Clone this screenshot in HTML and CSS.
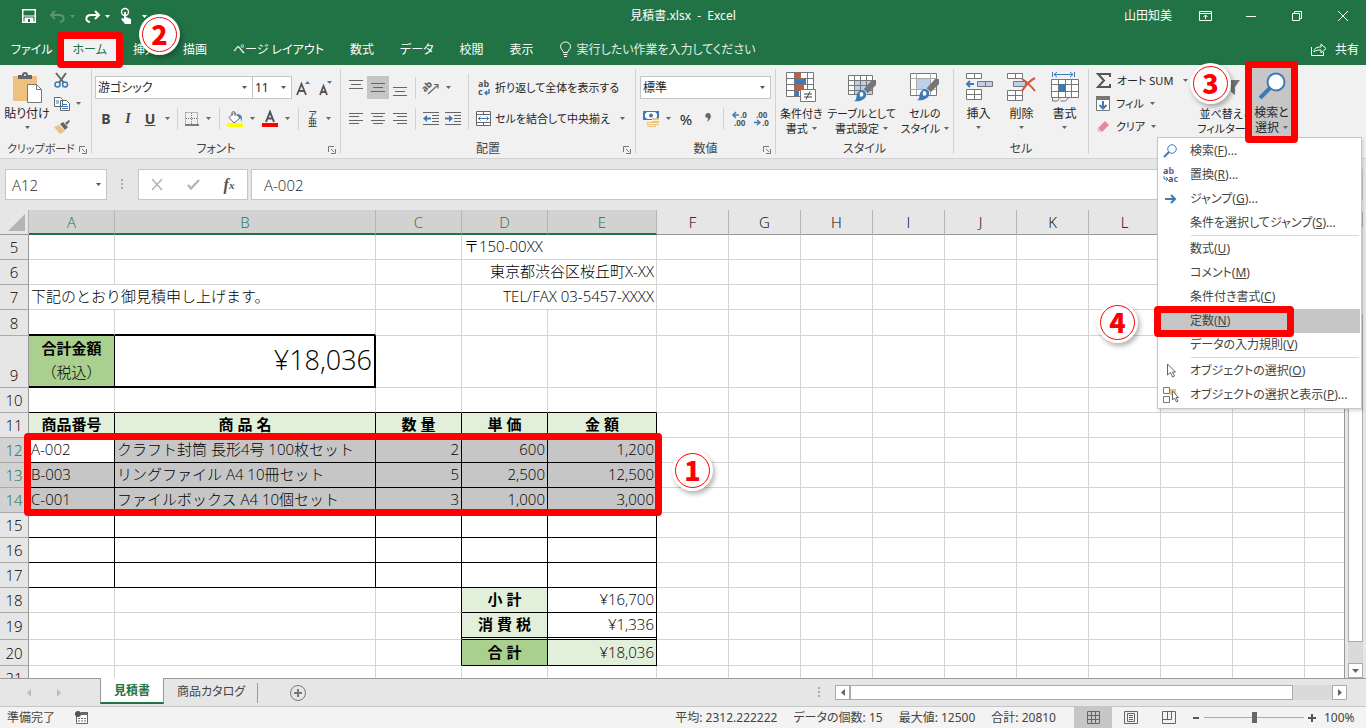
FILE: index.html
```html
<!DOCTYPE html>
<html lang="ja">

<head>
  <meta charset="UTF-8" />
  <meta name="viewport" content="width=device-width,initial-scale=1.0" />
  <title>見積書.xlsx - Excel</title>
  <link rel="stylesheet" href="styles.css">
</head>

<body>
  <svg class="defs" width="0" height="0" aria-hidden="true">
    <symbol id="down" viewBox="0 0 5 3"><path d="M0 0h5L2.500 3z" fill="currentColor" /></symbol>
    <symbol id="launcher" viewBox="0 0 8 8"><path d="M.5 6V.5H6M3 3l3 3M7.500 3v4.500H3" fill="none" stroke="#777" /></symbol>
    <symbol id="brush" viewBox="0 0 24 22">
      <path d="M23 0v5l-9 9-4-4 9-10z" fill="#777" />
      <path d="M14 14l-4-4" stroke="#f1f1f1" stroke-width="2" />
      <path d="M9 10c3 0 5 3 4 6-1 4-7 6-12 5 3-1 2-4 3-7 1-2 3-4 5-4z" fill="#3e7ab8" />
      <path d="M8 12c2 0 3 2 2 4-1 1-3 1-3 0 0-2-1-3 1-4z" fill="#fff" />
    </symbol>
    <symbol id="lens" viewBox="0 0 28 28">
      <circle cx="18" cy="10" r="8.500" fill="#fff" stroke="#3e7ab8" stroke-width="2" />
      <path d="M12 16L2 26" stroke="#3e7ab8" stroke-width="4" />
    </symbol>
  </svg>

  <!-- タイトルバー -->
  <header class="top">
    <div class="titlebar">
      <div class="quick">
        <button aria-label="上書き保存"><svg width="14" height="14" viewBox="0 0 14 14"><path d="M.75.75h12.500v12.500H.75z" fill="none" stroke="#fff" stroke-width="1.500" /><path d="M1 7h12M3 9h8v4H3z" fill="#fff" stroke="#fff" /><path d="M6 10h2v3H6z" fill="#217346" /></svg></button>
        <button class="dim" aria-label="元に戻す"><svg width="15" height="13" viewBox="0 0 15 13"><path d="M5 1L1 5l4 4M1 5h8c6 0 6 7 1 7" fill="none" stroke="currentColor" stroke-width="2" /></svg><svg class="arrow"><use href="#down" /></svg></button>
        <button aria-label="やり直し"><svg width="15" height="13" viewBox="0 0 15 13"><path d="M10 1l4 4-4 4M14 5H6c-6 0-6 7-1 7" fill="none" stroke="#fff" stroke-width="2" /></svg><svg class="arrow"><use href="#down" /></svg></button>
        <button aria-label="タッチ/マウス モード"><svg width="12" height="16" viewBox="0 0 12 16"><circle cx="5" cy="4" r="3.500" fill="none" stroke="#fff" stroke-width="1.400" /><path d="M4 4h2v5l5 2v5H5L1 11l2-1 1 1z" fill="#fff" /></svg></button>
        <svg class="arrow"><use href="#down" /></svg>
      </div>
      <span class="title">見積書.xlsx&nbsp; -&nbsp; Excel</span>
      <div class="window">
        <span class="user">山田知美</span>
        <button aria-label="リボンの表示オプション"><svg width="13" height="10" viewBox="0 0 13 10"><path d="M.5.5h12v9H.5zM1 2.500h11M6.500 8V4M4.500 6l2-2 2 2" fill="none" stroke="#fff" /></svg></button>
        <button aria-label="最小化"><svg width="10" height="10" viewBox="0 0 10 10"><path d="M0 5.500h10" stroke="#fff" /></svg></button>
        <button aria-label="元のサイズに戻す"><svg width="10" height="10" viewBox="0 0 10 10"><path d="M.5 2.500h7v7h-7zM2.500 2V.5h7v7H8" fill="none" stroke="#fff" /></svg></button>
        <button aria-label="閉じる"><svg width="10" height="10" viewBox="0 0 10 10"><path d="M0 0l10 10M10 0L0 10" stroke="#fff" /></svg></button>
      </div>
    </div>

    <nav class="tabs">
      <button>ファイル</button>
      <div class="marked home">
        <button class="active">ホーム</button>
        <div class="frame frame-tab"></div>
      </div>
      <div class="marked">
        <button>挿入</button>
        <div class="num num-2">2</div>
      </div>
      <button>描画</button>
      <button>ページ レイアウト</button>
      <button>数式</button>
      <button>データ</button>
      <button>校閲</button>
      <button>表示</button>
      <button class="tell"><svg width="11" height="15" viewBox="0 0 11 15"><path d="M3.500 10.500c0-2-3-3-3-6a5 4.500 0 0 1 10 0c0 3-3 4-3 6zM3.500 12.500h4M4 14.500h3" fill="none" stroke="#fff" /></svg>実行したい作業を入力してください</button>
      <button class="share"><svg width="16" height="13" viewBox="0 0 16 13"><path d="M.5 4v8.500h12V9" fill="none" stroke="#fff" /><path d="M3 9c0-4 3-5 7-5V1l5 4.500L10 10V7C7 7 5 7 3 9z" fill="none" stroke="#fff" /></svg>共有</button>
    </nav>
  </header>

  <!-- リボン -->
  <section class="ribbon">
    <div class="group g-clip">
      <div class="body">
        <button class="big"><svg width="30" height="32" viewBox="0 0 30 32"><path d="M1 4h24v25H1z" fill="#ecc27e" /><path d="M6 7V3h4a3 3 0 0 1 6 0h4v4z" fill="#666" /><circle cx="13" cy="3" r="1" fill="#f1f1f1" /><path d="M15.500 12.500h9l5 5v13h-14z" fill="#fff" stroke="#777" /><path d="M24.500 12.500v5h5" fill="none" stroke="#777" /></svg><span>貼り付け</span><svg class="arrow"><use href="#down" /></svg></button>
        <div class="stack">
          <button aria-label="切り取り"><svg width="15" height="15" viewBox="0 0 15 15"><path d="M2 0l8 10M12 0L5 10" stroke="#666" stroke-width="2" /><circle cx="3.500" cy="11.500" r="2.500" fill="none" stroke="#3e7ab8" stroke-width="1.500" /><circle cx="11" cy="11.500" r="2.500" fill="none" stroke="#3e7ab8" stroke-width="1.500" /></svg></button>
          <button aria-label="コピー"><svg width="16" height="14" viewBox="0 0 16 14"><path d="M.5.5h6l2 2v7h-8zM6.500 3.500h6l3 3v7h-9z" fill="#fff" stroke="#666" /><path d="M2 4h3M2 6h3M8 7.500h5M8 9.500h6M8 11.500h6" stroke="#3e7ab8" /></svg><svg class="arrow"><use href="#down" /></svg></button>
          <button aria-label="書式のコピー"><svg width="16" height="14" viewBox="0 0 16 14"><path d="M0 7l5-2 6 6-5 3z" fill="#ecc27e" /><path d="M6 4l3-2 5 5-3 3zM11 3l4-3 1 1-3 4z" fill="#666" /></svg></button>
        </div>
      </div>
      <div class="foot"><span>クリップボード</span><svg class="launch"><use href="#launcher" /></svg></div>
    </div>

    <div class="group g-font">
      <div class="body rows">
        <div class="line">
          <select class="font-name" aria-label="フォント"><option>游ゴシック</option></select><select class="font-size" aria-label="フォント サイズ"><option>11</option></select>
          <button class="glyph" aria-label="フォント サイズの拡大"><svg width="15" height="16" viewBox="0 0 15 16"><path d="M1 15L5.500 4 10 15M2.500 11h6" fill="none" stroke="#555" stroke-width="1.800" /><path d="M9 4l2.500-3L14 4z" fill="#3e7ab8" /></svg></button>
          <button class="glyph" aria-label="フォント サイズの縮小"><svg width="15" height="16" viewBox="0 0 15 16"><path d="M2 15l3.500-9L9 15M3.500 12h4" fill="none" stroke="#555" stroke-width="1.800" /><path d="M9 1h5l-2.500 3z" fill="#3e7ab8" /></svg></button>
        </div>
        <div class="line">
          <button class="biu"><b>B</b></button>
          <button class="biu"><i>I</i></button>
          <button class="biu"><u>U</u></button>
          <button class="more" aria-label="下線の種類"><svg class="arrow"><use href="#down" /></svg></button>
          <i class="sep"></i>
          <button class="tool" aria-label="罫線"><svg width="14" height="14" viewBox="0 0 14 14"><path d="M.5.5h12v12M.5.5v12M6.500 1v12M1 6.500h12" fill="none" stroke="#777" stroke-dasharray="1 1" /><path d="M0 13h14" stroke="#555" stroke-width="1.500" /></svg><svg class="arrow"><use href="#down" /></svg></button>
          <i class="sep"></i>
          <button class="tool" aria-label="塗りつぶしの色"><svg width="16" height="16" viewBox="0 0 16 16"><path d="M2 6.500l5-5 6 5.500-6 5z" fill="#fff" stroke="#666" /><path d="M5 5V2c0-2 3-2 3 0v3" fill="none" stroke="#666" /><path d="M10 3c5 0 6 4 4 8 0-4-1-5-3-6z" fill="#3e7ab8" /><path d="M0 12h16v4H0z" fill="#ff0" /></svg><svg class="arrow"><use href="#down" /></svg></button>
          <button class="tool" aria-label="フォントの色"><svg width="16" height="16" viewBox="0 0 16 16"><path d="M4 11L8 1l4 10M5.500 7.500h5" fill="none" stroke="#555" stroke-width="2" /><path d="M0 12h16v4H0z" fill="#f00" /></svg><svg class="arrow"><use href="#down" /></svg></button>
          <i class="sep"></i>
          <button class="tool"><span class="ruby">ア<br>亜</span><svg class="arrow"><use href="#down" /></svg></button>
        </div>
      </div>
      <div class="foot"><span>フォント</span><svg class="launch"><use href="#launcher" /></svg></div>
    </div>

    <div class="group g-align">
      <div class="body">
        <div class="rows">
          <div class="line">
            <button class="glyph" aria-label="上揃え"><svg width="14" height="16" viewBox="0 0 14 16"><path d="M0 .5h14M2 4.500h10M0 8.500h14" stroke="#666" /></svg></button>
            <button class="glyph on" aria-label="上下中央揃え"><svg width="14" height="16" viewBox="0 0 14 16"><path d="M0 3.500h14M2 7.500h10M0 11.500h14" stroke="#666" /></svg></button>
            <button class="glyph" aria-label="下揃え"><svg width="14" height="16" viewBox="0 0 14 16"><path d="M0 7.500h14M2 11.500h10M0 15.500h14" stroke="#666" /></svg></button>
            <i class="sep"></i>
            <button class="tool" aria-label="方向"><svg width="16" height="16" viewBox="0 0 16 16"><path d="M5 14L15 5M11 4.500h4v4" fill="none" stroke="#666" stroke-width="1.200" /><text x="0" y="10" transform="rotate(-45 4 9)" class="svg-ab">ab</text></svg><svg class="arrow"><use href="#down" /></svg></button>
          </div>
          <div class="line">
            <button class="glyph" aria-label="左揃え"><svg width="14" height="12" viewBox="0 0 14 12"><path d="M0 .5h14M0 3.500h10M0 7.500h14M0 10.500h10" stroke="#666" /></svg></button>
            <button class="glyph" aria-label="中央揃え"><svg width="14" height="12" viewBox="0 0 14 12"><path d="M0 .5h14M2 3.500h10M0 7.500h14M2 10.500h10" stroke="#666" /></svg></button>
            <button class="glyph" aria-label="右揃え"><svg width="14" height="12" viewBox="0 0 14 12"><path d="M0 .5h14M4 3.500h10M0 7.500h14M4 10.500h10" stroke="#666" /></svg></button>
            <i class="sep"></i>
            <button class="glyph" aria-label="インデントを減らす"><svg width="16" height="13" viewBox="0 0 16 13"><path d="M0 .5h16M9 3.500h7M9 6.500h7M9 9.500h7M0 12.500h16" stroke="#666" /><path d="M0 6.500L4 3v2.500h4v2H4V10z" fill="#3e7ab8" /></svg></button>
            <button class="glyph" aria-label="インデントを増やす"><svg width="16" height="13" viewBox="0 0 16 13"><path d="M0 .5h16M9 3.500h7M9 6.500h7M9 9.500h7M0 12.500h16" stroke="#666" /><path d="M8 6.500L4 3v2.500H0v2h4V10z" fill="#3e7ab8" /></svg></button>
          </div>
        </div>
        <i class="sep tall"></i>
        <div class="rows">
          <div class="line">
            <button class="wide"><svg width="15" height="18" viewBox="0 0 15 18"><text x="2" y="8" class="svg-ab">ab</text><text x="2" y="16" class="svg-ab">c</text><path d="M13 10v4H9M11 12l-2 2 2 2" fill="none" stroke="#3e7ab8" stroke-width="1.500" /></svg>折り返して全体を表示する</button>
          </div>
          <div class="line">
            <button class="wide"><svg width="15" height="15" viewBox="0 0 15 15"><path d="M.5.5h14v14H.5zM.5 3.500h14M.5 11.500h14M7.500.5v3M7.500 11.500v3" fill="#fff" stroke="#666" /><path d="M2 7.500h11M4.500 5.500l-2 2 2 2M10.500 5.500l2 2-2 2" fill="none" stroke="#3e7ab8" /></svg>セルを結合して中央揃え<svg class="arrow"><use href="#down" /></svg></button>
          </div>
        </div>
      </div>
      <div class="foot"><span>配置</span><svg class="launch"><use href="#launcher" /></svg></div>
    </div>

    <div class="group g-num">
      <div class="body rows">
        <div class="line"><select class="number-format" aria-label="表示形式"><option>標準</option></select></div>
        <div class="line">
          <button class="tool" aria-label="通貨表示形式"><svg width="16" height="16" viewBox="0 0 16 16"><path d="M0 0h16v9H0z" fill="#3e7ab8" /><path d="M2 3l2-2h8l2 2v3l-2 2H4L2 6z" fill="#fff" /><circle cx="8" cy="4.500" r="2" fill="#3e7ab8" /><path d="M9 7h7v7h-3v2H4v-5h5z" fill="#ecc27e" /><path d="M9 9.500h7M5 12.500h11M4 14.500h8" stroke="#f1f1f1" /></svg><svg class="arrow"><use href="#down" /></svg></button>
          <button class="glyph percent">%</button>
          <button class="glyph comma" aria-label="桁区切りスタイル"><svg width="7" height="9" viewBox="0 0 7 9"><path d="M3 0c4 0 4 6-1 9 1-2 1-3 1-4-4 0-3-5 0-5z" fill="#666" /></svg></button>
          <i class="sep"></i>
          <button class="glyph dec"><svg width="15" height="14" viewBox="0 0 15 14"><path d="M7 3H1M4 0L1 3l3 3" fill="none" stroke="#3e7ab8" stroke-width="1.500" /><text x="8" y="6" class="svg-dec">.0</text><text x="2" y="14" class="svg-dec">.00</text></svg></button>
          <button class="glyph dec"><svg width="15" height="14" viewBox="0 0 15 14"><path d="M0 10.500h6M3 8l3 2.500L3 13" fill="none" stroke="#3e7ab8" stroke-width="1.500" /><text x="2" y="6" class="svg-dec">.00</text><text x="8" y="14" class="svg-dec">.0</text></svg></button>
        </div>
      </div>
      <div class="foot"><span>数値</span><svg class="launch"><use href="#launcher" /></svg></div>
    </div>

    <div class="group g-style">
      <div class="body">
        <button class="big"><svg width="30" height="30" viewBox="0 0 30 30"><path d="M.5.5h27v24H.5z" fill="#fff" /><path d="M9 1h6v5H9zM9 13h9v5H9z" fill="#d35735" /><path d="M9 7h11v5H9zM9 19h4v5H9z" fill="#3e7ab8" /><path d="M.5.5h27v24H.5zM8.500 0v24M21.500 0v24M0 6.500h28M0 12.500h28M0 18.500h28" fill="none" stroke="#777" /><path d="M14.500 17.500h15v12h-15z" fill="#fff" stroke="#777" /><path d="M18 22h8M18 25h8M24 19.500l-4 8" stroke="#444" /></svg><span>条件付き</span><span>書式<svg class="arrow"><use href="#down" /></svg></span></button>
        <button class="big"><svg width="30" height="30" viewBox="0 0 30 30"><path d="M1.500 3.500h24v19h-24z" fill="#fff" /><path d="M8 9h17v13H8z" fill="#bdd0e8" /><path d="M1.500 3.500h24v19h-24zM7.500 3v19M13.500 3v19M19.500 3v19M1 8.500h24M1 13.500h24M1 18.500h24" fill="none" stroke="#777" /><use href="#brush" x="6" y="8" width="24" height="22" /></svg><span>テーブルとして</span><span>書式設定<svg class="arrow"><use href="#down" /></svg></span></button>
        <button class="big"><svg width="30" height="30" viewBox="0 0 30 30"><path d="M.5 1.500h26v22H.5z" fill="#fff" stroke="#777" /><path d="M6.500 1v22M20.500 1v22M0 6.500h26M0 17.500h26" stroke="#aaa" /><path d="M7 7h13v10H7z" fill="#bdd0e8" /><use href="#brush" x="6" y="7" width="24" height="22" /></svg><span>セルの</span><span>スタイル<svg class="arrow"><use href="#down" /></svg></span></button>
      </div>
      <div class="foot"><span>スタイル</span></div>
    </div>

    <div class="group g-cell">
      <div class="body">
        <button class="big"><svg width="28" height="30" viewBox="0 0 28 30"><path d="M1.500 1.500h15v5h-15zM9.500 1.500v5M1.500 17.500h15v10h-15zM9.500 17.500v10M1.500 22.500h15" fill="#fff" stroke="#777" /><path d="M12.500 9.500h15v5h-15zM20.500 9.500v5" fill="#bdd0e8" stroke="#777" /><path d="M2 12h7M5 9l-3 3 3 3" fill="none" stroke="#3e7ab8" stroke-width="2" /></svg><span>挿入</span><svg class="arrow"><use href="#down" /></svg></button>
        <button class="big"><svg width="30" height="30" viewBox="0 0 30 30"><path d="M.5 1.500h15v5H.5zM8.500 1.500v5M.5 18.500h15v10H.5zM8.500 18.500v10M.5 23.500h15" fill="#fff" stroke="#777" /><path d="M6.500 9.500h12v5h-12z" fill="#bdd0e8" stroke="#777" /><path d="M15 7c5 3 9 7 13 12M28 6c-6 3-10 8-13 13" fill="none" stroke="#d35735" stroke-width="2" /></svg><span>削除</span><svg class="arrow"><use href="#down" /></svg></button>
        <button class="big"><svg width="28" height="30" viewBox="0 0 28 30"><path d="M1.500 0v5M23.500 0v5M3 2.500h19M6 0L3 2.500 6 5M19 0l3 2.500L19 5" fill="none" stroke="#3e7ab8" /><path d="M.5 7.500h27v18H.5zM7.500 7.500v18M14.500 7.500v18M20.500 7.500v18M.5 12.500h27M.5 19.500h27" fill="#fff" stroke="#777" /><path d="M8 12h7v8H8z" fill="#3e7ab8" /><path d="M1.500 26v3h5l2-3M9.500 29h5l3-3" fill="none" stroke="#777" /></svg><span>書式</span><svg class="arrow"><use href="#down" /></svg></button>
      </div>
      <div class="foot"><span>セル</span></div>
    </div>

    <div class="group g-edit">
      <div class="body">
        <div class="stack edit">
          <button class="sum"><svg width="15" height="15" viewBox="0 0 15 15"><path d="M14 4V1H2l6 6.500L2 14h12v-3" fill="none" stroke="#555" stroke-width="2" /></svg>オート SUM<svg class="arrow"><use href="#down" /></svg></button>
          <button><svg width="14" height="15" viewBox="0 0 14 15"><path d="M.5 1.500h13v13H.5z" fill="#fff" stroke="#777" /><path d="M0 0h14v4H0z" fill="#777" /><path d="M7 5v7M3.500 9L7 12.500 10.500 9" fill="none" stroke="#3e7ab8" stroke-width="2" /></svg>フィル<svg class="arrow"><use href="#down" /></svg></button>
          <button><svg width="14" height="15" viewBox="0 0 14 15"><path d="M9 2l4 4-7 7-4-4z" fill="#e8889a" /><path d="M2 9l4 4H3l-2-2z" fill="#f3bcc6" /></svg>クリア<svg class="arrow"><use href="#down" /></svg></button>
        </div>
        <button class="big sort"><svg width="30" height="30" viewBox="0 0 30 30"><path d="M14 8h15l-5 7v8l-4-3v-5z" fill="#777" /></svg><span>並べ替えと</span><span>フィルター<svg class="arrow"><use href="#down" /></svg></span></button>
        <div class="marked">
          <button class="big find"><svg width="28" height="30"><use href="#lens" width="28" height="30" /></svg><span>検索と</span><span>選択<svg class="arrow"><use href="#down" /></svg></span></button>
          <div class="frame frame-find"></div>
          <div class="num num-3">3</div>

          <!-- 検索と選択メニュー -->
          <div class="menu">
            <button><svg width="16" height="14"><use href="#lens" width="14" height="14" /></svg><span>検索(<u>F</u>)...</span></button>
            <button><svg width="16" height="16" viewBox="0 0 16 16"><text x="0" y="7" class="svg-ab">a<tspan fill="#8a52b0">b</tspan></text><text x="5" y="15" class="svg-ab">a<tspan fill="#3e7ab8">c</tspan></text><path d="M1 9v3h4M3 10l2 2-2 2" fill="none" stroke="#3e7ab8" /></svg><span>置換(<u>R</u>)...</span></button>
            <button><svg width="16" height="10" viewBox="0 0 16 10"><path d="M2 5h9M8 1l4 4-4 4" fill="none" stroke="#3e7ab8" stroke-width="2" /></svg><span>ジャンプ(<u>G</u>)...</span></button>
            <button><span>条件を選択してジャンプ(<u>S</u>)...</span></button>
            <hr>
            <button><span>数式(<u>U</u>)</span></button>
            <button><span>コメント(<u>M</u>)</span></button>
            <button><span>条件付き書式(<u>C</u>)</span></button>
            <div class="marked">
              <button class="on"><span>定数(<u>N</u>)</span></button>
              <div class="frame frame-item"></div>
              <div class="num num-4">4</div>
            </div>
            <button><span>データの入力規則(<u>V</u>)</span></button>
            <hr>
            <button><svg width="16" height="16" viewBox="0 0 16 16"><path d="M4.500 1v11l3-2.500L9.500 14l2-1-2-4h3z" fill="#fff" stroke="#666" /></svg><span>オブジェクトの選択(<u>O</u>)</span></button>
            <button><svg width="16" height="16" viewBox="0 0 16 16"><path d="M.5.5h6v6h-6zM.5 9.500h6v6h-6z" fill="#fff" stroke="#777" /><path d="M7 2h6v6H7z" fill="#ecc27e" /><path d="M9.500 4v9l2-2 2 4 1.500-1-2-3.500h2.500z" fill="#fff" stroke="#666" /></svg><span>オブジェクトの選択と表示(<u>P</u>)...</span></button>
          </div>
        </div>
      </div>
    </div>
  </section>

  <!-- 数式バー -->
  <section class="formula">
    <select class="name-box" aria-label="名前ボックス"><option>A12</option></select>
    <svg class="grip" width="3" height="11" viewBox="0 0 3 11"><path d="M0 0h2v2H0zM0 4h2v2H0zM0 8h2v2H0z" fill="#aaa" /></svg>
    <div class="fx">
      <button aria-label="キャンセル"><svg width="12" height="11" viewBox="0 0 12 11"><path d="M1 0l10 11M11 0L1 11" stroke="#b5b5b5" stroke-width="1.600" /></svg></button>
      <button aria-label="入力"><svg width="13" height="11" viewBox="0 0 13 11"><path d="M1 6l3 3.500L12 1" fill="none" stroke="#b5b5b5" stroke-width="2.400" /></svg></button>
      <button class="fx-btn">f<small>x</small></button>
    </div>
    <input class="formula-input" type="text" value="A-002" aria-label="数式">
  </section>

  <!-- シート -->
  <main class="sheet">
    <div class="grid">
      <table>
        <colgroup>
          <col class="c-head"><col class="c-a"><col class="c-b"><col class="c-c"><col class="c-c"><col class="c-e">
          <col><col><col><col><col><col><col><col><col><col>
        </colgroup>
        <thead>
          <tr>
            <th class="corner"><svg width="17" height="17" viewBox="0 0 17 17"><path d="M17 0v17H0z" fill="#b4b4b4" /></svg></th>
            <th class="sel">A</th><th class="sel">B</th><th class="sel">C</th><th class="sel">D</th><th class="sel">E</th>
            <th>F</th><th>G</th><th>H</th><th>I</th><th>J</th><th>K</th><th>L</th><th></th><th></th><th></th>
          </tr>
        </thead>
        <tbody>
          <tr><th>5</th><td></td><td></td><td></td><td colspan="2">〒150-00XX</td><td></td><td></td><td></td><td></td><td></td><td></td><td></td><td></td><td></td><td></td></tr>
          <tr><th>6</th><td></td><td></td><td></td><td colspan="2" class="r">東京都渋谷区桜丘町X-XX</td><td></td><td></td><td></td><td></td><td></td><td></td><td></td><td></td><td></td><td></td></tr>
          <tr><th>7</th><td colspan="2">下記のとおり御見積申し上げます。</td><td></td><td colspan="2" class="r">TEL/FAX 03-5457-XXXX</td><td></td><td></td><td></td><td></td><td></td><td></td><td></td><td></td><td></td><td></td></tr>
          <tr class="h26"><th>8</th><td class="thick-b"></td><td class="thick-b"></td><td></td><td></td><td></td><td></td><td></td><td></td><td></td><td></td><td></td><td></td><td></td><td></td><td></td></tr>
          <tr class="total"><th>9</th><td class="green c bk thick-b"><b>合計金額</b><br>（税込）</td><td class="amount thick-b thick-r">¥18,036</td><td></td><td></td><td></td><td></td><td></td><td></td><td></td><td></td><td></td><td></td><td></td><td></td><td></td></tr>
          <tr><th>10</th><td class="lb"></td><td class="lb"></td><td class="lb"></td><td class="lb"></td><td class="lb"></td><td></td><td></td><td></td><td></td><td></td><td></td><td></td><td></td><td></td><td></td></tr>
          <tr class="head"><th>11</th><td class="bk">商品番号</td><td class="bk">商 品 名</td><td class="bk">数 量</td><td class="bk">単 価</td><td class="bk">金 額</td><td></td><td></td><td></td><td></td><td></td><td></td><td></td><td></td><td></td><td></td></tr>
          <tr class="picked"><th>12</th><td class="bk cursor">A-002</td><td class="bk">クラフト封筒 長形4号 100枚セット</td><td class="bk r">2</td><td class="bk r">600</td><td class="bk r">1,200</td><td></td><td></td><td></td><td></td><td></td><td></td><td></td><td></td><td></td><td></td></tr>
          <tr class="picked"><th>13</th><td class="bk">B-003</td><td class="bk">リングファイル A4 10冊セット</td><td class="bk r">5</td><td class="bk r">2,500</td><td class="bk r">12,500</td><td></td><td></td><td></td><td></td><td></td><td></td><td></td><td></td><td></td><td></td></tr>
          <tr class="picked"><th>14</th><td class="bk">C-001</td><td class="bk">ファイルボックス A4 10個セット</td><td class="bk r">3</td><td class="bk r">1,000</td><td class="bk r">3,000</td><td></td><td></td><td></td><td></td><td></td><td></td><td></td><td></td><td></td><td></td></tr>
          <tr><th>15</th><td class="bk"></td><td class="bk"></td><td class="bk"></td><td class="bk"></td><td class="bk"></td><td></td><td></td><td></td><td></td><td></td><td></td><td></td><td></td><td></td><td></td></tr>
          <tr><th>16</th><td class="bk"></td><td class="bk"></td><td class="bk"></td><td class="bk"></td><td class="bk"></td><td></td><td></td><td></td><td></td><td></td><td></td><td></td><td></td><td></td><td></td></tr>
          <tr><th>17</th><td class="bk"></td><td class="bk"></td><td class="bk"></td><td class="bk"></td><td class="bk"></td><td></td><td></td><td></td><td></td><td></td><td></td><td></td><td></td><td></td><td></td></tr>
          <tr><th>18</th><td></td><td></td><td class="lr"></td><td class="bk c pale"><b>小 計</b></td><td class="bk r">¥16,700</td><td></td><td></td><td></td><td></td><td></td><td></td><td></td><td></td><td></td><td></td></tr>
          <tr class="h26"><th>19</th><td></td><td></td><td class="lr"></td><td class="bk c pale double"><b>消 費 税</b></td><td class="bk r double">¥1,336</td><td></td><td></td><td></td><td></td><td></td><td></td><td></td><td></td><td></td><td></td></tr>
          <tr class="h26"><th>20</th><td></td><td></td><td class="lr"></td><td class="bk c green"><b>合 計</b></td><td class="bk r pale">¥18,036</td><td></td><td></td><td></td><td></td><td></td><td></td><td></td><td></td><td></td><td></td></tr>
          <tr><th>21</th><td></td><td></td><td></td><td></td><td></td><td></td><td></td><td></td><td></td><td></td><td></td><td></td><td></td><td></td><td></td></tr>
        </tbody>
      </table>
      <div class="frame frame-cells"></div>
      <div class="num num-1">1</div>
    </div>
    <div class="vscroll">
      <button aria-label="上へ"><svg width="7" height="4" viewBox="0 0 7 4"><path d="M0 4h7L3.500 0z" fill="#666" /></svg></button>
      <div class="vtrack"><div class="vthumb"></div></div>
      <button aria-label="下へ"><svg width="7" height="4" viewBox="0 0 7 4"><path d="M0 0h7L3.500 4z" fill="#666" /></svg></button>
    </div>
  </main>

  <!-- シート見出し -->
  <section class="sheet-tabs">
    <div class="nav">
      <button aria-label="前のシート"><svg width="4" height="8" viewBox="0 0 4 8"><path d="M4 0v8L0 4z" fill="#bbb" /></svg></button>
      <button aria-label="次のシート"><svg width="4" height="8" viewBox="0 0 4 8"><path d="M0 0v8l4-4z" fill="#bbb" /></svg></button>
    </div>
    <button class="sheet-tab current">見積書</button>
    <button class="sheet-tab">商品カタログ</button>
    <i class="sep"></i>
    <button class="add" aria-label="新しいシート"><svg width="16" height="16" viewBox="0 0 16 16"><circle cx="8" cy="8" r="7.500" fill="none" stroke="#777" /><path d="M8 4v8M4 8h8" stroke="#777" stroke-width="2" /></svg></button>
    <svg class="grip end" width="3" height="11" viewBox="0 0 3 11"><path d="M0 0h2v2H0zM0 4h2v2H0zM0 8h2v2H0z" fill="#aaa" /></svg>
    <div class="hscroll">
      <button aria-label="左へ"><svg width="4" height="7" viewBox="0 0 4 7"><path d="M4 0v7L0 3.500z" fill="#666" /></svg></button>
      <div class="htrack"><div class="hthumb"></div></div>
      <button aria-label="右へ"><svg width="4" height="7" viewBox="0 0 4 7"><path d="M0 0v7l4-3.500z" fill="#666" /></svg></button>
    </div>
  </section>

  <!-- ステータスバー -->
  <footer class="status">
    <span>準備完了</span>
    <svg class="macro" width="13" height="13" viewBox="0 0 13 13"><path d="M1.500 3.500h11v9h-11z" fill="#fff" stroke="#666" /><path d="M6 1h7v3H6z" fill="#666" /><circle cx="3" cy="3" r="3" fill="#555" /><path d="M3 7.500h8M3 10h8" stroke="#666" stroke-dasharray="2 1" /></svg>
    <div class="stats">
      <span>平均: 2312.222222</span>
      <span>データの個数: 15</span>
      <span>最大値: 12500</span>
      <span>合計: 20810</span>
    </div>
    <div class="views">
      <button class="on" aria-label="標準"><svg width="13" height="13" viewBox="0 0 13 13"><path d="M.5.5h12v12H.5zM4.500 0v13M8.500 0v13M0 4.500h13M0 8.500h13" fill="none" stroke="#666" /></svg></button>
      <button aria-label="ページ レイアウト"><svg width="14" height="13" viewBox="0 0 14 13"><path d="M.5.5h13v12H.5zM3.500 2.500h7v8h-7zM5 4.500h4M5 6.500h4M5 8.500h4" fill="none" stroke="#666" /></svg></button>
      <button aria-label="改ページ プレビュー"><svg width="14" height="13" viewBox="0 0 14 13"><path d="M.5.5h13v12H.5zM.5 8.500h9v-8M5.500.5v8" fill="none" stroke="#666" /></svg></button>
    </div>
    <div class="zoom">
      <button aria-label="縮小"><svg width="8" height="8" viewBox="0 0 8 8"><path d="M1 4h6" stroke="#555" stroke-width="2" /></svg></button>
      <input type="range" min="0" max="100" value="50" aria-label="ズーム">
      <button aria-label="拡大"><svg width="8" height="8" viewBox="0 0 8 8"><path d="M0 4h8M4 0v8" stroke="#555" stroke-width="2" /></svg></button>
      <span>100%</span>
    </div>
  </footer>
</body>

</html>
```

FILE: styles.css
```css
* {
  box-sizing: border-box;
}

body {
  margin: 0;
  height: 100vh;
  display: flex;
  flex-direction: column;
  overflow: hidden;
  background: #e6e6e6;
  color: #262626;
  font-family: "Noto Sans", "Noto Sans CJK JP", sans-serif;
  font-size: 12px;
  line-height: 16px;
  font-feature-settings: "palt";
}

button,
select,
input {
  margin: 0;
  padding: 0;
  border: 0;
  border-radius: 0;
  background: none;
  color: inherit;
  font: inherit;
  font-feature-settings: inherit;
}

button {
  display: flex;
  align-items: center;
  justify-content: center;
  white-space: nowrap;
}

svg {
  flex: none;
  display: block;
  overflow: visible;
}

.defs {
  position: absolute;
}

.arrow {
  width: 5px;
  height: 3px;
  color: #666;
}

select {
  appearance: none;
  background: #fff url("data:image/svg+xml,%3Csvg xmlns='http://www.w3.org/2000/svg' width='5' height='3'%3E%3Cpath d='M0 0h5L2.500 3z' fill='%23555'/%3E%3C/svg%3E") no-repeat right 5px center;
  border: 1px solid #c6c6c6;
  padding-left: 2px;
}

.marked {
  position: relative;
}

/* 赤枠と番号 */
.frame {
  position: absolute;
  border: 7px solid #f00;
  border-radius: 4px;
  pointer-events: none;
  z-index: 5;
}

.num {
  position: absolute;
  width: 41px;
  height: 41px;
  border-radius: 50%;
  background: #fff;
  box-shadow: 2px 3px 5px rgba(0, 0, 0, .3);
  color: #f00;
  font-size: 27px;
  font-weight: 900;
  line-height: 39px;
  text-align: center;
  font-family: "Noto Sans CJK JP", sans-serif;
  pointer-events: none;
  z-index: 6;
}

.num::before {
  content: "";
  position: absolute;
  inset: 3px;
  border: 1px solid #f00;
  border-radius: 50%;
}

.frame-tab {
  inset: -7px;
}

.num-2 {
  left: 19px;
  top: -25px;
}

.frame-find {
  inset: -7px;
}

.num-3 {
  left: -62px;
  top: -5px;
}

.frame-item {
  top: -3px;
  bottom: -4px;
  left: -5px;
  width: 140px;
}

.num-4 {
  left: -62px;
  top: -7px;
}

.frame-cells {
  left: 24px;
  top: 223px;
  width: 638px;
  height: 83px;
}

.num-1 {
  left: 672px;
  top: 240px;
}

/* タイトルバー */
.top {
  background: #217346;
  color: #fff;
}

.titlebar {
  height: 32px;
  display: grid;
  grid-template-columns: 1fr auto 1fr;
  align-items: center;
}

.quick {
  display: flex;
  align-items: center;
  gap: 10px;
  padding-left: 22px;
}

.quick button {
  gap: 5px;
}

.quick .arrow {
  color: #fff;
}

.quick button:first-child {
  margin-right: 4px;
}

.quick .dim,
.quick .dim .arrow {
  color: #5a9576;
}

.window {
  display: flex;
  align-items: center;
  justify-content: flex-end;
}

.window button {
  width: 46px;
  height: 32px;
}

.user {
  padding-right: 10px;
}

.tabs {
  height: 33px;
  display: flex;
  align-items: center;
  padding: 2px 7px 0 0;
}

.tabs button {
  height: 22px;
  padding: 0 13px;
}

.tabs > button:first-child {
  padding: 0 11px;
}

.tabs .active {
  background: #f1f1f1;
  color: #217346;
  padding: 0 9px;
}

.tabs .home {
  margin-right: 4px;
}

.tabs .tell {
  gap: 6px;
  color: #e4efe8;
}

.tabs .share {
  margin-left: auto;
  padding: 0;
  gap: 8px;
}

/* リボン */
.ribbon {
  height: 94px;
  display: flex;
  background: #f1f1f1;
  border-bottom: 1px solid #d2d2d2;
  position: relative;
  z-index: 2;
}

.group {
  display: flex;
  flex-direction: column;
  flex: none;
  margin: 4px 0;
  border-right: 1px solid #d2d2d2;
}

.g-clip {
  width: 92px;
}

.g-font {
  width: 249px;
}

.g-align {
  width: 295px;
}

.g-num {
  width: 140px;
}

.g-style {
  width: 178px;
}

.g-cell {
  width: 135px;
}

.g-edit {
  flex: 1;
  border-right: 0;
}

.body {
  flex: 1;
  display: flex;
  padding-left: 4px;
}

.foot {
  height: 10px;
  display: flex;
  align-items: center;
  justify-content: center;
  position: relative;
  color: #444;
}

.launch {
  width: 8px;
  height: 8px;
  position: absolute;
  right: 4px;
  bottom: 0;
}

.g-clip .foot {
  justify-content: flex-start;
  padding-left: 7px;
  font-size: 11px;
}

.big {
  flex-direction: column;
  justify-content: flex-start;
  padding-top: 3px;
  line-height: 15px;
}

.big > svg:first-child {
  margin-bottom: 4px;
}

.big span {
  display: flex;
  align-items: center;
  gap: 4px;
}

.big > .arrow {
  margin-top: 5px;
}

.g-clip .big {
  width: 46px;
}

.g-clip .big > svg:first-child {
  margin-bottom: 2px;
}

.stack {
  display: flex;
  flex-direction: column;
  align-items: flex-start;
}

.stack button {
  height: 23px;
  gap: 6px;
  padding-left: 4px;
}

.rows {
  display: flex;
  flex-direction: column;
  gap: 8px;
  padding-top: 7px;
}

.g-font .body {
  padding-left: 3px;
}

.line {
  display: flex;
  align-items: center;
  height: 23px;
}

.font-name {
  width: 158px;
  height: 23px;
}

.font-size {
  width: 39px;
  height: 23px;
  border-left: 0;
}

.glyph,
.biu {
  width: 22px;
  height: 23px;
}

.biu {
  font-size: 14px;
  color: #444;
}

.biu i {
  font-family: "Liberation Serif", serif;
  font-weight: bold;
}

.biu u {
  font-weight: bold;
}

.more {
  width: 12px;
}

.tool {
  height: 23px;
  gap: 7px;
  padding: 0 4px 0 3px;
}

.sep {
  width: 1px;
  height: 22px;
  margin: 0 4px;
  background: #d2d2d2;
}

.sep.tall {
  height: 56px;
  margin: 5px 7px 0 1px;
}

.ruby {
  font-size: 9px;
  line-height: 8px;
  width: 13px;
}

.on {
  background: #c6c6c6;
}

.svg-ab {
  font: bold 9px "Noto Sans", sans-serif;
  fill: #555;
}

.svg-dec {
  font: bold 8px "Noto Sans", sans-serif;
  fill: #555;
}

.g-align .rows .line {
  min-width: 122px;
}

.wide {
  gap: 4px;
  font-size: 11px;
}

.wide .arrow {
  margin-left: 6px;
}

.number-format {
  width: 131px;
  height: 23px;
}

.percent {
  font-size: 15px;
}

.comma {
  padding-bottom: 3px;
}

.g-style .body {
  padding: 0 4px;
  justify-content: space-between;
}

.g-style .big {
  font-size: 11px;
}

.g-cell .body {
  padding-left: 3px;
}

.g-cell .big {
  width: 43px;
}

.g-edit .body {
  padding-left: 3px;
}

.edit {
  width: 108px;
  font-size: 11px;
}

.sum .arrow {
  margin-left: 4px;
}

.sort {
  width: 52px;
  font-size: 11px;
}

.find {
  width: 39px;
  height: 68px;
  background: #c6c6c6;
}

.g-edit .marked {
  align-self: flex-start;
  margin-top: -1px;
}

.g-edit .menu .marked {
  margin-top: 0;
}

/* メニュー */
.menu {
  position: absolute;
  top: 69px;
  right: -71px;
  width: 205px;
  padding: 1px;
  background: #fff;
  border: 1px solid #c6c6c6;
  box-shadow: 1px 2px 3px rgba(0, 0, 0, .15);
  color: #444;
}

.menu button {
  width: 100%;
  height: 24px;
  padding-left: 4px;
  justify-content: flex-start;
}

.menu button > span {
  margin-left: auto;
  width: 170px;
  text-align: left;
}

.menu hr {
  margin: 0 1px 1px 32px;
  border: 0;
  height: 1px;
  background: #d8d8d8;
}

/* 数式バー */
.formula {
  height: 51px;
  display: flex;
  align-items: center;
  padding: 0 3px 0 5px;
  font-family: "Open Sans", "Noto Sans CJK JP", sans-serif;
  font-weight: 300;
}

.name-box {
  width: 102px;
  height: 31px;
  padding-left: 6px;
  font-size: 15px;
}

.formula .grip {
  margin: 0 14px;
}

.fx {
  display: flex;
  width: 110px;
  height: 31px;
  background: #fff;
  border: 1px solid #c6c6c6;
}

.fx button {
  flex: 1;
}

.fx-btn {
  color: #555;
  font: italic bold 16px "Liberation Serif", serif;
}

.fx-btn small {
  font-size: 11px;
}

.formula-input {
  flex: 1;
  height: 31px;
  margin-left: 3px;
  padding-left: 12px;
  background: #fff;
  border: 1px solid #c6c6c6;
  font-size: 15px;
}

/* シート */
.sheet {
  flex: 1;
  min-height: 0;
  display: flex;
}

.grid {
  flex: 1;
  min-width: 0;
  overflow: hidden;
  position: relative;
  background: #fff;
  border-right: 1px solid #999;
}

table {
  width: 1377px;
  table-layout: fixed;
  border-collapse: separate;
  border-spacing: 0;
  font-family: "Open Sans", "Noto Sans CJK JP", sans-serif;
  font-size: 15px;
  line-height: 22px;
  font-weight: 300;
  font-feature-settings: normal;
  color: #000;
}

col {
  width: 72px;
}

.c-head {
  width: 29px;
}

.c-a,
.c-c {
  width: 86px;
}

.c-b {
  width: 261px;
}

.c-e {
  width: 109px;
}

th,
td {
  height: 25px;
  padding: 0 2px 2px;
  border-right: 1px solid #d4d4d4;
  border-bottom: 1px solid #d4d4d4;
  white-space: nowrap;
  overflow: hidden;
}

th {
  padding: 0;
  background: #e6e6e6;
  font-weight: 300;
  border-bottom-color: #aaa;
  border-right-color: #999;
}

thead th {
  border-right-color: #b5b5b5;
  border-bottom-color: #999;
}

thead .sel {
  background: #d2d2d2;
  color: #217346;
  border-bottom: 2px solid #217346;
}

.corner svg {
  margin-left: 8px;
}

.h26 th,
.h26 td {
  height: 26px;
}

.total th,
.total td {
  height: 51px;
  line-height: 24px;
}

.total th {
  vertical-align: bottom;
}

.r {
  text-align: right;
}

.c,
.head td {
  text-align: center;
}

.bk,
.lb {
  border-bottom-color: #000;
}

.bk,
.lr {
  border-right-color: #000;
}

tbody b,
.head td {
  font-weight: 700;
}

.thick-b {
  border-bottom: 2px solid #000;
}

.thick-r {
  border-right: 2px solid #000;
}

.double {
  border-bottom: 3px double #000;
}

.green {
  background: #a9d08e;
}

.pale,
.head .bk {
  background: #e2efda;
}

.amount {
  font-size: 27px;
  text-align: right;
}

.picked .bk {
  background: #c6c6c6;
}

.picked .cursor {
  background: #fff;
}

.picked th {
  background: #d2d2d2;
  color: #217346;
}

/* スクロールバー */
.vscroll {
  width: 21px;
  padding: 2px 3px 0;
  display: flex;
  flex-direction: column;
}

.vscroll button,
.hscroll button {
  width: 15px;
  height: 15px;
  background: #fff;
  border: 1px solid #ababab;
}

.vtrack {
  flex: 1;
  display: flex;
  flex-direction: column;
  justify-content: flex-end;
  padding-bottom: 21px;
  background: #dadada;
}

.vthumb {
  height: 79%;
  background: #fff;
  border: 1px solid #ababab;
}

.sheet-tabs {
  height: 28px;
  display: flex;
  align-items: center;
  border-top: 1px solid #999;
  padding-right: 19px;
  color: #444;
}

.nav {
  width: 100px;
  display: flex;
  gap: 26px;
  padding-left: 27px;
}

.sheet-tab {
  align-self: flex-start;
  height: 25px;
  padding: 0 12px 0 13px;
}

.sheet-tab.current {
  margin-top: -1px;
  height: 26px;
  min-width: 64px;
  padding: 2px 11px 0;
  background: #fff;
  color: #217346;
  font-weight: bold;
  border: 1px solid #999;
  border-top: 0;
  border-bottom: 2px solid #217346;
}

.sheet-tabs .sep {
  margin: 0;
  background: #999;
  height: 20px;
}

.add {
  margin-left: 32px;
}

.end {
  margin-left: auto;
  margin-right: 14px;
}

.hscroll {
  width: 38%;
  display: flex;
}

.htrack {
  flex: 1;
  background: #dadada;
}

.hthumb {
  width: 92%;
  height: 15px;
  background: #fff;
  border: 1px solid #ababab;
}

/* ステータスバー */
.status {
  height: 22px;
  display: flex;
  align-items: center;
  padding: 0 8px 0 7px;
  background: #f3f3f3;
  border-top: 1px solid #c6c6c6;
  color: #444;
}

.macro {
  margin-left: 20px;
}

.stats {
  margin-left: auto;
  display: flex;
  gap: 16px;
}

.views {
  display: flex;
  align-self: stretch;
  margin-left: 18px;
}

.views button {
  width: 38px;
}

.zoom {
  display: flex;
  align-items: center;
  gap: 4px;
  margin-left: 4px;
}

.zoom input {
  appearance: none;
  width: 100px;
  height: 12px;
  background: linear-gradient(#aaa, #aaa) no-repeat center / 100% 1px;
}

.zoom input::-webkit-slider-thumb {
  appearance: none;
  width: 5px;
  height: 11px;
  background: #666;
}

.zoom span {
  width: 34px;
  margin-left: 4px;
}
```
